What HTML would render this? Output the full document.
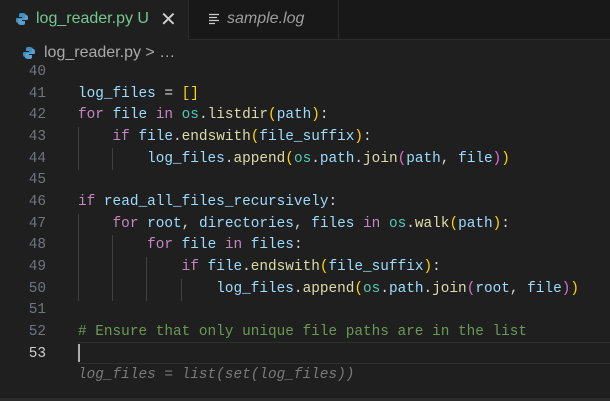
<!DOCTYPE html>
<html><head><style>
body{margin:0;width:610px;height:401px;background:#1f1f1f;overflow:hidden;position:relative;font-family:"Liberation Sans",sans-serif}
.tabs{position:absolute;left:0;top:0;width:610px;height:39px;background:#181818;border-bottom:1px solid #2b2b2b}
.tab1{position:absolute;left:0;top:0;width:188px;height:40px;background:#1f1f1f;color:#73c991;font-size:16px}
.tab2{position:absolute;left:188px;top:0;width:149px;height:39px;border-right:1px solid #2b2b2b;border-left:1px solid #2b2b2b;color:#9d9d9d;font-size:16px;font-style:italic}
.bc{position:absolute;left:22px;top:44px;color:#a9a9a9;font-size:16px}
.code{position:absolute;left:0;top:62px;font-family:"Liberation Mono",monospace;font-size:14.4px}
.l{height:21.67px;line-height:21.67px;white-space:pre;position:relative}
.n{display:inline-block;width:46px;text-align:right;color:#6e7681;margin-right:32px}
.k{color:#c586c0}.v{color:#9cdcfe}.f{color:#dcdcaa}.m{color:#4ec9b0}.y{color:#ffd700}.p{color:#da70d6}.c{color:#6a9955}.w{color:#d4d4d4}
.g{position:absolute;width:1px;background:#404040}
</style></head><body>
<div class="tabs"></div>
<div class="tab1">
<svg style="position:absolute;left:15px;top:12px" width="14" height="14" viewBox="0 0 14 14"><path d="M7 1C4 1 4 2 4 3v2h3v1H2C1 6 1 7 1 8s0 3 2 3h1V9c0-1 1-2 2-2h3c1 0 2-1 2-2V3c0-1-1-2-4-2z" fill="#3f8fbf"/><path d="M7 13c3 0 3-1 3-2V9H7V8h5c1 0 1-1 1-2s0-3-2-3h-1v2c0 1-1 2-2 2H5c-1 0-2 1-2 2v2c0 1 1 2 4 2z" fill="#5a9fd0"/></svg>
<span style="position:absolute;left:36px;top:10px">log_reader.py U</span>
<span style="position:absolute;left:160px;top:7px;color:#ccc;font-size:20px;font-style:normal">✕</span>
</div>
<div class="tab2">
<svg style="position:absolute;left:20px;top:13px" width="12" height="12"><path d="M0 1.5h10M0 4.5h8M0 7.5h10M0 10.5h6" stroke="#ccc" stroke-width="1.2"/></svg>
<span style="position:absolute;left:38px;top:10px">sample.log</span>
</div>
<svg style="position:absolute;left:22px;top:46px" width="14" height="14" viewBox="0 0 14 14"><path d="M7 1C4 1 4 2 4 3v2h3v1H2C1 6 1 7 1 8s0 3 2 3h1V9c0-1 1-2 2-2h3c1 0 2-1 2-2V3c0-1-1-2-4-2z" fill="#3f8fbf"/><path d="M7 13c3 0 3-1 3-2V9H7V8h5c1 0 1-1 1-2s0-3-2-3h-1v2c0 1-1 2-2 2H5c-1 0-2 1-2 2v2c0 1 1 2 4 2z" fill="#5a9fd0"/></svg>
<div class="bc" style="left:44px">log_reader.py &gt; …</div>
<div class="g" style="left:78px;top:127px;height:43px"></div>
<div class="g" style="left:112px;top:148px;height:22px"></div>
<div class="g" style="left:78px;top:214px;height:87px"></div>
<div class="g" style="left:112px;top:235px;height:66px"></div>
<div class="g" style="left:146px;top:257px;height:44px"></div>
<div class="g" style="left:181px;top:279px;height:22px"></div>
<div style="position:absolute;left:78px;top:342px;width:532px;height:20px;border-top:1px solid #2e2e2e;border-bottom:1px solid #2e2e2e"></div>
<div style="position:absolute;left:78px;top:344px;width:2px;height:18px;background:#aeafad"></div>
<div class="code">
<div class="l"><span class="n">40</span></div>
<div class="l"><span class="n">41</span><span class="v">log_files</span><span class="w"> = </span><span class="y">[]</span></div>
<div class="l"><span class="n">42</span><span class="k">for</span> <span class="v">file</span> <span class="k">in</span> <span class="m">os</span><span class="w">.</span><span class="f">listdir</span><span class="y">(</span><span class="v">path</span><span class="y">)</span><span class="w">:</span></div>
<div class="l"><span class="n">43</span>    <span class="k">if</span> <span class="v">file</span><span class="w">.</span><span class="f">endswith</span><span class="y">(</span><span class="v">file_suffix</span><span class="y">)</span><span class="w">:</span></div>
<div class="l"><span class="n">44</span>        <span class="v">log_files</span><span class="w">.</span><span class="f">append</span><span class="y">(</span><span class="m">os</span><span class="w">.</span><span class="v">path</span><span class="w">.</span><span class="f">join</span><span class="p">(</span><span class="v">path</span><span class="w">, </span><span class="v">file</span><span class="p">)</span><span class="y">)</span></div>
<div class="l"><span class="n">45</span></div>
<div class="l"><span class="n">46</span><span class="k">if</span> <span class="v">read_all_files_recursively</span><span class="w">:</span></div>
<div class="l"><span class="n">47</span>    <span class="k">for</span> <span class="v">root</span><span class="w">, </span><span class="v">directories</span><span class="w">, </span><span class="v">files</span> <span class="k">in</span> <span class="m">os</span><span class="w">.</span><span class="f">walk</span><span class="y">(</span><span class="v">path</span><span class="y">)</span><span class="w">:</span></div>
<div class="l"><span class="n">48</span>        <span class="k">for</span> <span class="v">file</span> <span class="k">in</span> <span class="v">files</span><span class="w">:</span></div>
<div class="l"><span class="n">49</span>            <span class="k">if</span> <span class="v">file</span><span class="w">.</span><span class="f">endswith</span><span class="y">(</span><span class="v">file_suffix</span><span class="y">)</span><span class="w">:</span></div>
<div class="l"><span class="n">50</span>                <span class="v">log_files</span><span class="w">.</span><span class="f">append</span><span class="y">(</span><span class="m">os</span><span class="w">.</span><span class="v">path</span><span class="w">.</span><span class="f">join</span><span class="p">(</span><span class="v">root</span><span class="w">, </span><span class="v">file</span><span class="p">)</span><span class="y">)</span></div>
<div class="l"><span class="n">51</span></div>
<div class="l"><span class="n">52</span><span class="c"># Ensure that only unique file paths are in the list</span></div>
<div class="l"><span class="n" style="color:#ccc">53</span></div>
<div class="l"><span class="n"></span><span style="color:#7a7a7a;font-style:italic">log_files = list(set(log_files))</span></div>
</div>
<div style="position:absolute;left:0;top:398px;width:610px;height:3px;background:#2b2b2b"></div>
</body></html>
